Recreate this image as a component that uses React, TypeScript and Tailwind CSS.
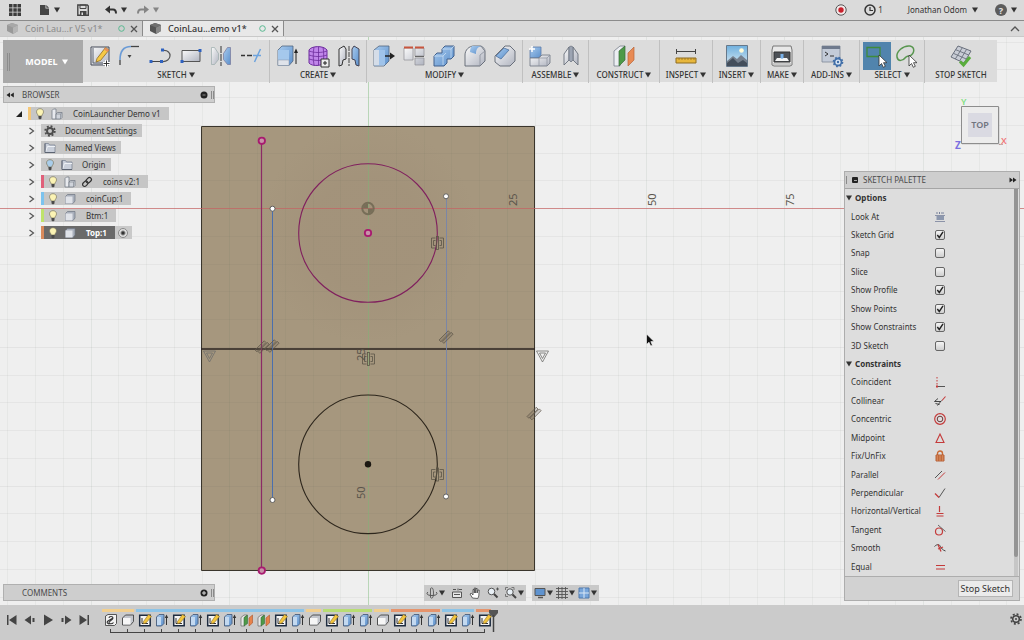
import React from "react";

type Kids = { children?: React.ReactNode };

/* ---------- shared pieces ---------- */

function Icon({ s = 24, vb = 24, children }: { s?: number; vb?: number } & Kids) {
  return (
    <svg width={s} height={s} viewBox={`0 0 ${vb} ${vb}`} fill="none" className="block shrink-0" aria-hidden="true">
      {children}
    </svg>
  );
}

function Caret({ light = false }: { light?: boolean }) {
  return (
    <svg width="6" height="6" viewBox="0 0 6 6" className="block shrink-0" aria-hidden="true">
      <path d="M0 .5h6L3 5.600z" fill={light ? "#fff" : "#333"} />
    </svg>
  );
}

function Defs() {
  return (
    <svg width="0" height="0" className="absolute" aria-hidden="true">
      <defs>
        <linearGradient id="blue" x1="0" y1="0" x2="1" y2="1">
          <stop offset="0" stopColor="#a9cbee" />
          <stop offset="1" stopColor="#5b8fcb" />
        </linearGradient>
        <linearGradient id="grey" x1="0" y1="0" x2="1" y2="1">
          <stop offset="0" stopColor="#fafafa" />
          <stop offset="1" stopColor="#b0b4c0" />
        </linearGradient>
        <linearGradient id="sky" x1="0" y1="0" x2="0" y2="1">
          <stop offset="0" stopColor="#6fb0de" />
          <stop offset="1" stopColor="#dcebf3" />
        </linearGradient>
      </defs>
    </svg>
  );
}

/* ---------- toolbar icons ---------- */

const SketchIcon = () => (
  <Icon>
    <path d="M3 3h18v18H3z" fill="url(#grey)" stroke="#444b58" />
    <path d="M5 4v15h15" stroke="#5a6270" />
    <path d="M9 14.5l8.5-11 3.5 2.5-8.500 10.500-4.500 1.500z" fill="#f6c945" stroke="#8a6a26" strokeWidth=".8" />
    <path d="M17.500 3.500l3.500 2.500-1.500 2-3.500-2.500z" fill="#e58f5c" />
    <path d="M15 19.500h7M18.500 16v7" stroke="#fff" strokeWidth="3" />
    <path d="M15.500 19.500h6M18.500 16.500v6" stroke="#333" />
  </Icon>
);
const FilletIcon = () => (
  <Icon>
    <path d="M2 21v-5" stroke="#444" strokeWidth="1.300" />
    <path d="M2 16C2 7 5 2.500 13 2.500" stroke="#6b9bd6" strokeWidth="1.600" />
    <path d="M13 2.500h8" stroke="#444" strokeWidth="1.300" />
    <path d="M9.500 11h4l-2 3z" fill="#444" />
  </Icon>
);
const PolyIcon = () => (
  <Icon>
    <path d="M2 17.500h11" stroke="#444" />
    <path d="M13 17.500c10 1 11-12 1-11" stroke="#555" strokeWidth="1.200" />
    <path d="M.500 16h3v3h-3zM11 16h3v3h-3zM12 4.500h3v3h-3z" fill="#2f62c0" />
  </Icon>
);
const RectIcon = () => (
  <Icon>
    <path d="M3 6.500h18v11H3z" fill="url(#grey)" stroke="#555" />
    <path d="M1.500 16h3v3h-3zM19.500 5h3v3h-3z" fill="#2f62c0" />
  </Icon>
);
const MirrorIcon = () => (
  <Icon>
    <path d="M2.500 3.500h3l4 6v6l-4 5h-3z" fill="url(#grey)" stroke="#9aa" strokeWidth=".7" />
    <path d="M12 2v20" stroke="#333" strokeDasharray="7 1" />
    <path d="M21.500 3.500h-3l-4 6v6l4 5h3z" fill="url(#blue)" stroke="#779" strokeWidth=".7" />
  </Icon>
);
const TrimIcon = () => (
  <Icon>
    <path d="M1 11.500h4M7 11.500h5" stroke="#333" strokeWidth="1.300" />
    <path d="M13 11.500h8M20.500 5l-6 13" stroke="#6ea4de" strokeWidth="1.500" />
  </Icon>
);
const ExtrudeIcon = () => (
  <Icon>
    <path d="M3 6l4-4h11v15l-4 4.500H3z" fill="url(#blue)" stroke="#51657f" strokeWidth=".8" />
    <path d="M3 6h11v10H3z" fill="#a5c8ec" />
    <path d="M3 16h11v5.500H3z" fill="#dfe3ea" stroke="#8592a5" strokeWidth=".5" />
    <path d="M21 20V7" stroke="#222" />
    <path d="M19 9l2-4.500L23 9z" fill="#222" />
  </Icon>
);
const FormIcon = () => (
  <Icon>
    <path d="M3 6c2-4 14-5 18 0v11c-3 5-15 6-18 2z" fill="#c086ea" stroke="#6c2c9c" />
    <path d="M3 7c6 2 12 2 18 0M3 11c6 2 12 2 18 0M3 15c6 2 12 2 18 0M8 3c-1 6-1 12 0 18M12.500 3v18M17 3c1 6 1 12 0 18" stroke="#6c2c9c" strokeWidth=".8" />
    <path d="M15 15h8v8h-8z" fill="#eee" stroke="#333" />
    <path d="M19 17v4M17 19h4" stroke="#222" />
  </Icon>
);
const MirrorSolidIcon = () => (
  <Icon>
    <path d="M2 5l5-3 2 3v10l-3 1-1 5-3 1z" fill="url(#grey)" stroke="#333" />
    <path d="M12 2v20" stroke="#444" strokeDasharray="5 1" />
    <path d="M22 5l-5-3-2 3v10l3 1 1 5 3 1z" fill="url(#blue)" stroke="#445" />
  </Icon>
);
const PressPullIcon = () => (
  <Icon>
    <path d="M2 6l5-4h10v15l-5 5H2z" fill="url(#blue)" stroke="#51657f" strokeWidth=".8" />
    <path d="M2 6h10v15.500H2z" fill="#d5dde8" />
    <path d="M7 6h6v15H7z" fill="#9fc3ea" />
    <path d="M13 12h6" stroke="#222" strokeWidth="1.500" />
    <path d="M18 8.500l5 3.500-5 3.500z" fill="#222" />
  </Icon>
);
const AlignIcon = () => (
  <Icon>
    <path d="M2 4h9v12H2zM13 4h9v8h-9zM13 14h9v7h-9z" fill="url(#grey)" stroke="#8d8d94" strokeWidth=".7" />
    <path d="M2 2.500h9v2H2zM13 2.500h9v2h-9z" fill="#c8553d" />
    <path d="M13 12.500h9" stroke="#666" />
  </Icon>
);
const CombineIcon = () => (
  <Icon>
    <path d="M2 12l3-3h5V5l3-3h9v10l-3 3h-4v4l-3 3H2z" fill="url(#blue)" stroke="#42618c" />
    <path d="M2 12h9v9M10 5h9v9M11 12l3-3M19 5l3-3" stroke="#d5e6f7" strokeWidth=".7" />
  </Icon>
);
const RoundIcon = () => (
  <Icon>
    <path d="M2 11c0-5 4-9 9-9h7l4 5v10l-5 5H2z" fill="url(#grey)" stroke="#5d6470" strokeWidth=".9" />
    <path d="M9 2h9c-3 1-5 3-5 8l-6-2c0-3 1-5 2-6z" fill="url(#blue)" />
    <path d="M18 2c3 1 4 3 4 5l-5 4v11" stroke="#8a909c" strokeWidth=".8" />
  </Icon>
);
const ChamferIcon = () => (
  <Icon>
    <path d="M2 12L12 2h5l5 5v10l-5 5H7l-5-4z" fill="url(#grey)" stroke="#5d6470" strokeWidth=".9" />
    <path d="M3 12l8-8 5 2-8 9z" fill="url(#blue)" stroke="#50729d" strokeWidth=".8" />
  </Icon>
);
const JoinIcon = () => (
  <Icon>
    <path d="M2 6l3-3h8v8l-3 3H2z" fill="url(#blue)" stroke="#5d7ca8" strokeWidth=".8" />
    <path d="M2 14h9l3-3h8v8l-3 3H2z" fill="url(#grey)" stroke="#6d7480" strokeWidth=".8" />
    <path d="M11 14v8M11 14h8l3-3M19 14v8" stroke="#8a909c" strokeWidth=".7" />
    <path d="M4 2v6M1 5h6" stroke="#fff" strokeWidth="1.500" />
  </Icon>
);
const HingeIcon = () => (
  <Icon>
    <path d="M5 10l5-7v13l-5 5zM19 10l-5-7v13l5 5z" fill="url(#grey)" stroke="#69707c" strokeWidth=".9" />
    <path d="M10 3l2-1 2 1v13l-2 2-2-2z" fill="#9ca4b2" stroke="#69707c" strokeWidth=".7" />
  </Icon>
);
const PlaneIcon = () => (
  <Icon>
    <path d="M2 7l6-5h5l-5 5v15H2z" fill="#eceef2" stroke="#777e8a" strokeWidth=".8" />
    <path d="M7 7l6-5v14l-6 6z" fill="#4d9a48" stroke="#3a6b39" strokeWidth=".7" />
    <path d="M16 9l6-6v13l-6 6z" fill="#e88a54" stroke="#b9653a" strokeWidth=".7" />
  </Icon>
);
const MeasureIcon = () => (
  <Icon>
    <path d="M2 7.500h20M2.500 5v5M21.500 5v5" stroke="#444" />
    <path d="M2 14h20v5H2z" fill="#e8b73c" stroke="#8f6d20" />
    <path d="M5 14v2M8 14v2M11 14v2M14 14v2M17 14v2M20 14v2" stroke="#8f6d20" strokeWidth=".7" />
  </Icon>
);
const PictureIcon = () => (
  <Icon>
    <path d="M1.500 1.500h21v21h-21z" fill="url(#sky)" stroke="#66788a" />
    <circle cx="16.500" cy="6.500" r="2.300" fill="#fffbd8" />
    <path d="M2 17l6-5 4 3 4-4 6 5v6H2z" fill="#76808d" />
    <path d="M2 19l6-5 5 5 5-3 4 3v3H2z" fill="#444e5b" />
  </Icon>
);
const PrinterIcon = () => (
  <Icon>
    <path d="M3 2h18l1 4v15l-2 1H4l-2-1V6z" fill="#e8e8e8" stroke="#777" />
    <path d="M4 8h16v10H4z" fill="#4d5157" stroke="#333" />
    <path d="M7 14h10l2 3H5z" fill="#f5f5f5" />
    <path d="M10.500 10h3v4l-1.500 1-1.500-1z" fill="#7ab2ea" />
    <path d="M3 20h18" stroke="#aaa" />
  </Icon>
);
const AddInsIcon = () => (
  <Icon>
    <path d="M2 2h18v16H2z" fill="#c3cbd8" stroke="#7e8897" strokeWidth=".8" />
    <path d="M2 2h18v3H2z" fill="#6f7a8d" />
    <path d="M5 8l3 2-3 2M10 12h4" stroke="#333" />
    <circle cx="18" cy="18" r="3.500" fill="#dbe7f4" stroke="#426fa8" strokeWidth="1.800" />
    <circle cx="18" cy="18" r="4.600" stroke="#426fa8" strokeWidth="1.500" strokeDasharray="1.800 1.800" />
    <circle cx="18" cy="18" r="1.200" fill="#426fa8" />
  </Icon>
);
const Pointer = () => <path d="M14 11v11l2.500-2.500 1.800 3.800 2-1-1.800-3.600H22z" fill="#fff" stroke="#333" strokeWidth=".8" />;
const SelectBoxIcon = () => (
  <Icon>
    <path d="M2 3.500h13v9H2z" stroke="#3f8b3b" strokeWidth="1.300" />
    <Pointer />
  </Icon>
);
const LassoIcon = () => (
  <Icon>
    <path d="M15 12c5-3 5-9 0-10C8 1 1 8 2 13s6 4 9 0c1-1 3-1 4-1z" stroke="#58964f" strokeWidth="1.500" />
    <Pointer />
  </Icon>
);
const StopIcon = () => (
  <Icon>
    <path d="M2 13L9 2l13 5-7 12z" fill="#c9cdd6" stroke="#6a707d" />
    <path d="M4.300 9.300l13 5.700M6.700 5.700l13 5.300M6.300 15L13.300 3.700M10.600 17l7-11.700" stroke="#6a707d" strokeWidth=".9" />
    <path d="M11 17.500l3.500 3.500 6.500-8" stroke="#59ad3c" strokeWidth="3" />
  </Icon>
);

/* ---------- toolbar ---------- */

type Group = { label: string; caret?: boolean; icons: [string, () => React.ReactNode][] };

const groups: Group[] = [
  {
    label: "SKETCH",
    icons: [
      ["Create sketch", SketchIcon],
      ["Fillet", FilletIcon],
      ["Line", PolyIcon],
      ["Rectangle", RectIcon],
      ["Mirror", MirrorIcon],
      ["Trim", TrimIcon],
    ],
  },
  { label: "CREATE", icons: [["Extrude", ExtrudeIcon], ["Create form", FormIcon], ["Mirror body", MirrorSolidIcon]] },
  {
    label: "MODIFY",
    icons: [
      ["Press pull", PressPullIcon],
      ["Align", AlignIcon],
      ["Combine", CombineIcon],
      ["Round edge", RoundIcon],
      ["Chamfer", ChamferIcon],
    ],
  },
  { label: "ASSEMBLE", icons: [["New component", JoinIcon], ["Joint", HingeIcon]] },
  { label: "CONSTRUCT", icons: [["Offset plane", PlaneIcon]] },
  { label: "INSPECT", icons: [["Measure", MeasureIcon]] },
  { label: "INSERT", icons: [["Decal", PictureIcon]] },
  { label: "MAKE", icons: [["3D print", PrinterIcon]] },
  { label: "ADD-INS", icons: [["Scripts", AddInsIcon]] },
  { label: "SELECT", icons: [["Window selection", SelectBoxIcon], ["Freeform selection", LassoIcon]] },
  { label: "STOP SKETCH", caret: false, icons: [["Finish sketch", StopIcon]] },
];

function Toolbar() {
  return (
    <div
      role="toolbar"
      className="mr-[27px] ml-[3px] grid h-[42px] grid-cols-[80fr_186fr_97fr_156fr_66fr_71fr_53fr_48fr_43fr_56fr_65fr_73fr] bg-[#dcdcdc]"
    >
      <button className="flex items-center bg-[#a9a9a9] text-[9px] font-bold text-white">
        <span className="ml-1 h-[18px] w-[3px] border-x border-[#8c8c8c]" />
        <span className="flex flex-1 items-center justify-center gap-[4px]">
          MODEL <Caret light />
        </span>
      </button>
      {groups.map((g, gi) => (
        <div key={g.label} className={`flex flex-col justify-between py-[2px] ${gi > 0 ? "border-l border-[#c0c0c0]" : ""}`}>
          <div className="flex justify-around px-[2px]">
            {g.icons.map(([name, Glyph]) => (
              <button
                key={name}
                aria-label={name}
                className={`flex h-[28px] w-[28px] items-center justify-center ${name === "Window selection" ? "bg-[#5184ad]" : ""}`}
              >
                <Glyph />
              </button>
            ))}
          </div>
          <button className="flex items-center justify-center gap-[2px] pb-px text-[8px] leading-[10px] font-medium whitespace-nowrap text-[#333]">
            {g.label}
            {g.caret !== false && <Caret />}
          </button>
        </div>
      ))}
    </div>
  );
}

/* ---------- top bars ---------- */

function AppBar() {
  return (
    <header className="flex h-[21px] items-center justify-between border-b border-[#8b8b8b] bg-[#dadada] pr-[7px] pl-[9px] text-[8px] text-[#333]">
      <div className="flex items-center">
        <button aria-label="Data panel" className="mr-[19px]">
          <Icon s={12} vb={12}>
            <path d="M0 0h3.500v3.500H0zM4.300 0h3.500v3.500H4.300zM8.500 0H12v3.500H8.500zM0 4.300h3.500v3.500H0zM4.300 4.300h3.500v3.500H4.300zM8.500 4.300H12v3.500H8.500zM0 8.500h3.500V12H0zM4.300 8.500h3.500V12H4.300zM8.500 8.500H12V12H8.500z" fill="#3c3c3c" />
          </Icon>
        </button>
        <button aria-label="File" className="mr-[17px] flex items-center gap-1">
          <Icon s={10} vb={10}>
            <path d="M0 0h5.500v3.500H9V10H0z" fill="#444" />
            <path d="M6.300 0L9 2.800H6.300z" fill="#444" />
          </Icon>
          <Caret />
        </button>
        <button aria-label="Save" className="mr-[16px]">
          <Icon s={12} vb={12}>
            <path d="M.800 1h9.500l1 1v9.200H.800z" stroke="#444" strokeWidth="1.400" />
            <path d="M3 1h6v3.500H3z" stroke="#444" />
            <path d="M3 7h6.500v4H3z" fill="#444" />
            <path d="M4.500 8.500H6V11H4.500z" fill="#ddd" />
          </Icon>
        </button>
        <button aria-label="Undo" className="mr-[10px] flex items-center gap-1">
          <Icon s={12} vb={12}>
            <path d="M0 5.500L5 1.500v8z" fill="#333" />
            <path d="M4 5.500h4c2.500 0 3 1.500 3 4" stroke="#333" strokeWidth="2" />
          </Icon>
          <Caret />
        </button>
        <button aria-label="Redo" className="flex items-center gap-1 opacity-50">
          <Icon s={12} vb={12}>
            <path d="M12 5.500L7 1.500v8z" fill="#333" />
            <path d="M8 5.500H4c-2.500 0-3 1.500-3 4" stroke="#333" strokeWidth="2" />
          </Icon>
          <Caret />
        </button>
      </div>
      <div className="flex items-center">
        <button aria-label="Record" className="mr-[17px]">
          <Icon s={12} vb={12}>
            <circle cx="6" cy="6" r="5.200" fill="#f3e9e9" stroke="#555" />
            <circle cx="6" cy="6" r="2.700" fill="#c8202c" />
          </Icon>
        </button>
        <button aria-label="Job status" className="mr-[25px] flex items-center gap-[2px]">
          <Icon s={12} vb={12}>
            <circle cx="6" cy="6" r="5" stroke="#333" strokeWidth="1.500" />
            <path d="M6 3v3.500h3" stroke="#333" strokeWidth="1.200" />
          </Icon>
          1
        </button>
        <button className="mr-[17px] flex items-center gap-[5px]">
          Jonathan Odom <Caret />
        </button>
        <button aria-label="Help" className="flex items-center gap-1">
          <span className="flex h-[12px] w-[12px] items-center justify-center rounded-full bg-[#5c5c5c] text-[9px] leading-none font-bold text-[#e5e5e5]">?</span>
          <Caret />
        </button>
      </div>
    </header>
  );
}

function Tab({ name, active = false }: { name: string; active?: boolean }) {
  return (
    <div
      className={`flex h-full items-center border-r border-[#8a8a8a] pr-[4px] pl-[6px] text-[9px] ${
        active ? "w-[141px] bg-[#e8e8e8] font-medium text-[#333]" : "w-[143px] bg-[#cfcfcf] text-[#8a8a8a]"
      }`}
    >
      <Icon s={13} vb={13}>
        <path d="M1 3l5-2 6 2v6l-5 3-6-3z" fill={active ? "#555" : "#999"} />
        <path d="M7 5.500l5-2.500v6l-5 3z" fill={active ? "#888" : "#b5b5b5"} />
        <path d="M1 3l5-2 6 2-5 2.500z" fill={active ? "#707070" : "#a8a8a8"} />
      </Icon>
      <button className="ml-[6px] flex-1 text-left whitespace-nowrap">{name}</button>
      <Icon s={7} vb={7}>
        <circle cx="3.500" cy="3.500" r="2.800" stroke="#58b890" />
      </Icon>
      <button aria-label={`Close ${name}`} className="ml-[5px]">
        <Icon s={8} vb={8}>
          <path d="M1 1l6 6M7 1L1 7" stroke="#555" strokeWidth="1.300" />
        </Icon>
      </button>
    </div>
  );
}

function TabBar() {
  return (
    <nav className="flex h-[16px] items-center border-b border-[#c9c9c9] bg-[#d9d9d9]">
      <Tab name="Coin Lau...r V5 v1*" />
      <Tab name="CoinLau...emo v1*" active />
      <button aria-label="Collapse" className="mr-[4px] ml-auto">
        <Icon s={10} vb={10}>
          <path d="M1 7l4-4 4 4" stroke="#555" strokeWidth="1.300" />
        </Icon>
      </button>
    </nav>
  );
}

/* ---------- browser tree ---------- */

const Bulb = ({ off = false }: { off?: boolean }) => (
  <Icon s={12} vb={12}>
    <path d="M6 .700c2 0 3.500 1.300 3.500 3.200C9.500 5.700 8 6.200 7.800 8H4.200C4 6.200 2.500 5.700 2.500 3.900 2.500 2 4 .700 6 .700z" fill={off ? "#a9cdea" : "#fbf3b4"} stroke="#7d7860" strokeWidth=".7" />
    <path d="M4.500 8h3v2.500L6 11.600 4.500 10.500z" fill="#4a4a4a" />
  </Icon>
);
const Assembly = () => (
  <Icon s={12} vb={12}>
    <path d="M1 2.500L2.500 1H5v10H1z" fill="#e8eaee" stroke="#777d88" strokeWidth=".8" />
    <path d="M5 6l1.500-1.500H11v5L9.500 11H5z" fill="#d0d4db" stroke="#777d88" strokeWidth=".8" />
    <path d="M5 6h4.500v5M9.500 6L11 4.500" stroke="#777d88" strokeWidth=".6" />
  </Icon>
);
const Folder = () => (
  <Icon s={12} vb={12}>
    <path d="M1 1.500h3.500l1 1.500h5.500v7.500H1z" fill="#c9cfda" stroke="#7d8695" strokeWidth=".8" />
    <path d="M1.500 10l2-5.500h7.500" stroke="#eef1f5" />
    <path d="M1 1.500v9h10" stroke="#5c6472" />
  </Icon>
);
const Gear = () => (
  <Icon s={12} vb={12}>
    <circle cx="6" cy="6" r="4.800" stroke="#4c4c4c" strokeWidth="1.800" strokeDasharray="1.900 1.870" />
    <circle cx="6" cy="6" r="3" stroke="#4c4c4c" strokeWidth="2" />
  </Icon>
);
const Link = () => (
  <Icon s={12} vb={12}>
    <g transform="rotate(-45 6 6)" stroke="#333" strokeWidth="1.200">
      <rect x=".6" y="4" width="6" height="4" rx="2" />
      <rect x="5.400" y="4" width="6" height="4" rx="2" />
    </g>
  </Icon>
);
const Body = () => (
  <Icon s={12} vb={12}>
    <path d="M1.500 3.500L3.500 1.500h7.500v6.500L9 10.500H1.500z" fill="#a9b0bc" stroke="#6d7582" strokeWidth=".7" />
    <path d="M1.500 3.500h7v7h-7z" fill="#e0e3e9" />
  </Icon>
);

type Node = { label: string; icons: (() => React.ReactNode)[]; strip?: string; root?: boolean; selected?: boolean };

const OffBulb = () => <Bulb off />;

const nodes: Node[] = [
  { label: "CoinLauncher Demo v1", icons: [Bulb, Assembly], strip: "bg-[#f5c878]", root: true },
  { label: "Document Settings", icons: [Gear] },
  { label: "Named Views", icons: [Folder] },
  { label: "Origin", icons: [OffBulb, Folder] },
  { label: "coins v2:1", icons: [Bulb, Assembly, Link], strip: "bg-[#e0607a]" },
  { label: "coinCup:1", icons: [Bulb, Body], strip: "bg-[#7cc3ee]" },
  { label: "Btm:1", icons: [Bulb, Body], strip: "bg-[#bfe36c]" },
  { label: "Top:1", icons: [Bulb, Body], strip: "bg-[#d98a5c]", selected: true },
];

function PanelHeader({ title, minus = false }: { title: string; minus?: boolean }) {
  return (
    <div className="flex h-[17px] items-center border border-[#b0b0b0] bg-[#cecece] text-[8px] text-[#4a4a4a]">
      <span className="w-[18px] pl-[2px]">
        {minus && (
          <Icon s={8} vb={8}>
            <path d="M4 1.500v5L.500 4zM7.800 1.500v5L4.300 4z" fill="#222" />
          </Icon>
        )}
      </span>
      <h2 className="flex-1">{title}</h2>
      <button aria-label={minus ? "Hide browser" : "Add comment"} className="mr-[3px]">
        <Icon s={8} vb={8}>
          <circle cx="4" cy="4" r="3.500" fill="#222" />
          {!minus && <path d="M4 2v4M2 4h4" stroke="#ddd" />}
          {minus && <path d="M2.500 4h3" stroke="#888" />}
        </Icon>
      </button>
      <span className="h-[8px] w-[3px] border-x border-[#8a8a8a]" />
    </div>
  );
}

function Browser() {
  return (
    <section aria-label="Browser">
      <PanelHeader title="BROWSER" minus />
      <ul className="pt-[2px] text-[8px] text-[#333]">
        {nodes.map((n) => (
          <li key={n.label} className={`flex h-[17px] items-center ${n.root ? "pl-[12px]" : "pl-[24px]"}`}>
            <button aria-label={`Toggle ${n.label}`} className={n.root ? "w-[13px]" : "w-[14px]"}>
              <Icon s={8} vb={8}>
                {n.root ? <path d="M7 1v6H1z" fill="#222" /> : <path d="M2.500 1l4 3-4 3" stroke="#555" strokeWidth="1.200" />}
              </Icon>
            </button>
            <div className={`flex h-[13px] items-center ${n.selected ? "bg-[#6a6a6a] font-bold text-white" : "bg-[#c6c6c6]"}`}>
              {n.strip && <span className={`h-full w-[3px] ${n.strip}`} />}
              {n.icons.map((G, i) => (
                <span key={i} className="flex w-[17px] justify-center">
                  <G />
                </span>
              ))}
              <span className={n.strip ? "pr-2 pl-2" : "pr-[5px] pl-[7px]"}>{n.label}</span>
            </div>
            {n.selected && (
              <label className="flex h-[13px] w-[17px] items-center justify-center bg-[#c9c9c9]">
                <input
                  type="radio"
                  defaultChecked
                  aria-label="Activate Top:1"
                  className="m-0 h-[10px] w-[10px] appearance-none rounded-full border border-[#888] bg-[#e8e8e8] checked:bg-[radial-gradient(circle,#333_1px,#e0e0e0_3px)]"
                />
              </label>
            )}
          </li>
        ))}
      </ul>
    </section>
  );
}

/* ---------- sketch palette ---------- */

const options: [string, boolean][] = [
  ["Sketch Grid", true],
  ["Snap", false],
  ["Slice", false],
  ["Show Profile", true],
  ["Show Points", true],
  ["Show Constraints", true],
  ["3D Sketch", false],
];

const R = "#c43a3a";
const constraints: [string, React.ReactNode][] = [
  ["Coincident", <><path d="M3 1v8" stroke={R} strokeDasharray="1.500 1.500" /><path d="M3 10.500h8" stroke="#555" /><path d="M2 9.500h2v2H2z" fill={R} /></>],
  ["Collinear", <><path d="M8 5.500l3.500-4" stroke={R} strokeWidth="1.100" /><path d="M.500 6.500l3.500-3M.500 6.500h6.500M3.500 10.500l4-5M1.500 8.500l4 1" stroke="#333" strokeWidth=".9" /></>],
  ["Concentric", <><circle cx="6" cy="6" r="5.300" stroke={R} strokeWidth="1.200" /><circle cx="6" cy="6" r="2.800" stroke="#6a3a3a" /></>],
  ["Midpoint", <path d="M6 2l4 8.500H2z" stroke={R} strokeWidth="1.100" />],
  ["Fix/UnFix", <><path d="M3.500 5V3.500a2.500 2.500 0 015 0V5" stroke="#c96a35" strokeWidth="1.400" /><path d="M2 5h8v6H2z" fill="#e8a070" stroke="#b0552a" strokeWidth=".9" /><path d="M2 7h8M2 9h8M4.700 5v6M7.300 5v6" stroke="#b0552a" strokeWidth=".7" /></>],
  ["Parallel", <><path d="M1 9l7-7" stroke="#555" /><path d="M4 10.500l7-7" stroke={R} /></>],
  ["Perpendicular", <><path d="M5 10.500l6-9" stroke="#555" /><path d="M1 6.500l4 4" stroke={R} strokeWidth="1.200" /></>],
  ["Horizontal/Vertical", <><path d="M5.500 1v6" stroke={R} strokeWidth="1.200" /><path d="M2.500 8.500h7M2.500 11h7" stroke={R} /></>],
  ["Tangent", <><circle cx="5" cy="7.500" r="3.500" stroke={R} strokeWidth="1.200" /><path d="M4 1l7.500 6.500" stroke="#666" /></>],
  ["Smooth", <><path d="M.500 4.500c3-3 5-2 6 0s2 3.500 5 4.500" stroke="#444" /><path d="M4 2.500l3 7M4 7l5-2" stroke={R} strokeWidth="1.300" /></>],
  ["Equal", <path d="M2 4.500h9M2 8h9" stroke={R} strokeWidth="1.200" />],
];

function PaletteHeading({ children }: Kids) {
  return (
    <button className="flex items-center gap-[3px] pl-px text-left font-bold">
      <Caret />
      {children}
    </button>
  );
}

function Palette() {
  return (
    <section aria-label="Sketch palette" className="flex min-h-0 flex-1 flex-col border border-[#adadad] bg-[#dddddd] text-[8px] text-[#333]">
      <div className="flex h-[17px] shrink-0 items-center border-b border-[#a5a5a5] bg-[#cecece] pr-[2px] text-[#4a4a4a]">
        <span className="h-[8px] w-[2px] border-r border-[#8a8a8a]" />
        <span className="ml-[5px] flex h-[6px] w-[6px] items-center justify-center rounded-[1px] bg-[#222]">
          <span className="h-px w-[3px] bg-[#aaa]" />
        </span>
        <h2 className="ml-[5px] flex-1">SKETCH PALETTE</h2>
        <button aria-label="Collapse palette">
          <Icon s={8} vb={8}>
            <path d="M.500 1.500v5L4 4zM4 1.500v5L7.500 4z" fill="#222" />
          </Icon>
        </button>
      </div>
      <div className="flex min-h-0 flex-1">
        <div className="grid flex-1 auto-rows-fr items-stretch">
          <PaletteHeading>Options</PaletteHeading>
          <button className="flex items-center pl-[6px] text-left">
            <span className="w-[83px]">Look At</span>
            <Icon s={12} vb={12}>
              <path d="M2 2h2M5.500 1v2M7 2h3" stroke="#77809a" />
              <path d="M2.500 5h7.500v4H2.500z" fill="#8c97ad" />
              <path d="M1 4.500h10M1 10.500h10" stroke="#77809a" strokeWidth=".8" />
            </Icon>
          </button>
          {options.map(([label, on]) => (
            <label key={label} className="flex items-center pl-[6px]">
              <span className="w-[84px]">{label}</span>
              <span className="relative block h-[10px] w-[10px]">
                <input
                  type="checkbox"
                  defaultChecked={on}
                  className="peer m-0 block h-[10px] w-[10px] appearance-none rounded-[2px] border border-[#666] bg-linear-to-b from-[#f4f4f4] to-[#cfcfcf]"
                />
                <svg viewBox="0 0 10 10" className="pointer-events-none absolute inset-0 hidden h-[10px] w-[10px] peer-checked:block" aria-hidden="true">
                  <path d="M2.300 5l2 2.500L8 1.800" stroke="#222" strokeWidth="1.400" fill="none" />
                </svg>
              </span>
            </label>
          ))}
          <PaletteHeading>Constraints</PaletteHeading>
          {constraints.map(([label, art]) => (
            <button key={label} className="flex items-center pl-[6px] text-left">
              <span className="w-[83px]">{label}</span>
              <Icon s={12} vb={12}>{art}</Icon>
            </button>
          ))}
        </div>
        <div className="mr-px w-[4px] bg-[#c6c6c6]">
          <div className="h-[95%] rounded-b-[2px] bg-[#949494]" />
        </div>
      </div>
      <div className="flex h-[24px] shrink-0 items-center justify-end border-t border-[#adadad] bg-[#d2d2d2] pr-[6px]">
        <button className="h-[17px] border border-[#b5b5b5] bg-[#ebebeb] px-[2px] text-[9px] leading-[15px]">Stop Sketch</button>
      </div>
    </section>
  );
}

/* ---------- drawing canvas ---------- */

const STEP = 27.75;
const gx = Array.from({ length: 37 }, (_, i) => i - 13);
const gy = Array.from({ length: 21 }, (_, i) => i - 6);

function Hatch({ x, y }: { x: number; y: number }) {
  return (
    <g transform={`translate(${x} ${y}) rotate(-45)`} stroke="#5e574a" strokeWidth=".7" fill="#5e574a" fillOpacity=".2">
      <rect x="-7" y="-2.800" width="13" height="2.500" />
      <rect x="-6" y=".5" width="13" height="2.500" />
    </g>
  );
}
function Symmetry({ x, y }: { x: number; y: number }) {
  return (
    <g transform={`translate(${x} ${y})`} stroke="#5a5446" strokeWidth=".8" fill="none">
      <path d="M-2-5h-4V5h4M2-5h4V5H2M-2-2.500h-2v5h2M2-2.500h2v5H2" />
      <rect x="-1" y="-6.500" width="2" height="13" />
    </g>
  );
}
function Tri({ x, y }: { x: number; y: number }) {
  return (
    <g transform={`translate(${x} ${y})`} stroke="#6f6f6c" strokeWidth=".8" fill="none">
      <path d="M-6-5H6L0 6zM-3-3H3L0 2.500z" />
    </g>
  );
}

function Canvas() {
  const cls = "font-['Noto_Sans',sans-serif] text-[11px]";
  return (
    <svg className="absolute inset-0 h-full w-full" viewBox="0 37 1024 568" preserveAspectRatio="xMidYMid slice" fill="none" aria-label="Sketch canvas">
      <defs>
        <radialGradient id="shade">
          <stop offset=".5" stopColor="#94806c" stopOpacity=".18" />
          <stop offset="1" stopColor="#94806c" stopOpacity="0" />
        </radialGradient>
      </defs>
      <path d="M0 0h1024v640H0z" fill="#efefef" />
      <path d="M201.500 126.500h333v444h-333z" fill="#a6977e" />
      <circle cx="368" cy="233" r="110" fill="url(#shade)" />
      <g shapeRendering="crispEdges">
        {gx.map((i) => (
          <path key={i} d={`M${368.5 + i * STEP} 0V640`} stroke="#4a6a55" strokeOpacity={i % 5 === 0 ? 0.09 : 0.05} />
        ))}
        {gy.map((i) => (
          <path key={i} d={`M0 ${208.5 + i * STEP}H1024`} stroke="#555" strokeOpacity={i % 5 === 0 ? 0.08 : 0.06} />
        ))}
      </g>
      <path d="M368.500 37V605" stroke="#7fc47a" strokeOpacity=".4" />
      <path d="M201.500 126.500h333v444h-333z" stroke="#3a352c" />
      <path d="M0 208.500h1024" stroke="#c86464" strokeOpacity=".7" />
      <path d="M201 349h334" stroke="#2b2320" strokeWidth="1.500" />
      <g opacity=".8">
        <circle cx="368" cy="208.500" r="5.700" stroke="#6d6550" strokeWidth="2" />
        <path d="M368 208.500v-5a5 5 0 00-5 5zM368 208.500v5a5 5 0 005-5z" fill="#6d6550" />
      </g>
      <path d="M261.500 141v430" stroke="#8c2a66" strokeWidth="1.200" />
      <path d="M272.500 209v291" stroke="#4a6fae" />
      <path d="M446.500 197v299" stroke="#7784ab" strokeOpacity=".9" />
      <circle cx="368" cy="233" r="69.300" stroke="#80205e" strokeWidth="1.100" />
      <circle cx="368" cy="464.300" r="69.300" stroke="#2d261c" strokeWidth="1.100" />
      <g stroke="#a81a70" strokeWidth="1.800" fill="#c793a8">
        <circle cx="261.800" cy="140.800" r="3.200" />
        <circle cx="368" cy="233" r="3.200" />
        <circle cx="261.800" cy="570.600" r="3.200" />
      </g>
      <circle cx="368" cy="464.300" r="3.200" fill="#1c1812" />
      <g fill="#fff" stroke="#555" strokeWidth=".9">
        <circle cx="272.500" cy="208.700" r="2.500" />
        <circle cx="446" cy="196.300" r="2.500" />
        <circle cx="272.500" cy="500" r="2.500" />
        <circle cx="446" cy="496.500" r="2.500" />
      </g>
      <Hatch x={262} y={347} />
      <Hatch x={272} y={346} />
      <Hatch x={446} y={337} />
      <Hatch x={534} y={413.500} />
      <Symmetry x={437.500} y={243} />
      <Symmetry x={368.500} y={359} />
      <Symmetry x={437.500} y={474.500} />
      <Tri x={209.500} y={356} />
      <Tri x={542.500} y={356} />
      <g fill="#5a554b">
        <text className={cls} transform="translate(517 206) rotate(-90)">25</text>
        <text className={cls} transform="translate(656 206) rotate(-90)">50</text>
        <text className={cls} transform="translate(794 206) rotate(-90)">75</text>
        <text className={cls} transform="translate(365 361) rotate(-90)">25</text>
        <text className={cls} transform="translate(365 499) rotate(-90)">50</text>
      </g>
      <path d="M646.500 334v10.500l2.500-2.300 1.700 3.800 1.700-.8-1.600-3.600h3.300z" fill="#111" stroke="#fff" strokeWidth=".6" />
    </svg>
  );
}

function ViewCube() {
  return (
    <div className="flex h-[85px] justify-end pt-[8px] pr-[10px]">
      <svg width="56" height="60" viewBox="0 0 56 60" fill="none" className="font-['Noto_Sans',sans-serif]" aria-label="View cube">
        <path d="M45 50.500h4" stroke="#c9a7a7" />
        <path d="M8 13h38v38H8z" fill="#000" opacity=".08" />
        <path d="M7.500 12.500h37v37h-37z" fill="#ececec" stroke="#8d8d8d" />
        <path d="M14 19h24v24H14z" fill="#dadae2" />
        <text x="26" y="34" textAnchor="middle" fill="#70747e" className="text-[9px] font-semibold">TOP</text>
        <text x="7" y="11" fill="#7fe07f" className="text-[9px] font-semibold">Y</text>
        <text x="47" y="50" fill="#f07a7a" className="text-[9px] font-semibold">X</text>
        <text x="1" y="55" fill="#7b6fe0" className="text-[10px] font-bold">Z</text>
      </svg>
    </div>
  );
}

/* ---------- navigation bar ---------- */

const navA: [string, boolean, React.ReactNode][] = [
  ["Orbit", true, <><path d="M4.500 1.500C6 0 7.500 1 7.500 6s-1.500 6-3 4.500V1.500z" stroke="#555" strokeWidth=".9" /><path d="M2 5C-.5 7 2 8.500 6 8.500S12.500 7 10 5" stroke="#555" /></>],
  ["Look at", false, <><path d="M1.500 5h9v5.500h-9z" fill="#e8e8e8" stroke="#555" /><path d="M2 2.500h3M7 1.500v2M8 2.500h3M3 7.500h6" stroke="#555" /></>],
  ["Pan", false, <path d="M3.500 11L1 7l1.200-.8L4 8V2.500h1.300V6V1h1.400v5l.3-4.500h1.200V6l.8-3h1.200L9.800 9l-1 2.500z" fill="#fff" stroke="#444" strokeWidth=".8" />],
  ["Zoom", false, <><circle cx="4.500" cy="4.500" r="3.300" fill="#e9f0f6" stroke="#555" /><path d="M7 7l3.500 3.500" stroke="#444" strokeWidth="2" /><path d="M9 2h3M10.500.500v3" stroke="#444" strokeWidth=".8" /></>],
  ["Fit", true, <><path d="M.500 3V.500H3M6.500.500H9V3M.500 7v2.500H3" stroke="#777" /><circle cx="5" cy="5" r="3.200" fill="#e9f0f6" stroke="#555" /><path d="M7.500 7.500L11 11" stroke="#444" strokeWidth="2" /></>],
];
const navB: [string, boolean, React.ReactNode][] = [
  ["Display settings", true, <><path d="M1 1.500h10v7H1z" fill="#5f93cf" stroke="#555" /><path d="M4 10.500h5" stroke="#555" strokeWidth="1.500" /></>],
  ["Grid settings", true, <path d="M0 1.500h12M0 4.500h12M0 7.500h12M0 10.500h12M2.500 0v12M6 0v12M9.500 0v12" stroke="#555" strokeWidth=".9" />],
  ["Viewports", true, <><path d="M1 1h10v10H1z" fill="#77a5da" stroke="#4f78ac" /><path d="M6 1v10M1 6h10" stroke="#dbe8f6" /></>],
];

function NavBar() {
  const bar = "flex h-[16px] items-center bg-[#c9c9c9] px-[2px]";
  return (
    <div className="flex gap-[6px]">
      {[navA, navB].map((items, i) => (
        <div key={i} className={`${bar} ${i === 0 ? "gap-[6px]" : "gap-[3px]"}`}>
          {items.map(([name, menu, art]) => (
            <button key={name} aria-label={name} className="flex items-center gap-px">
              <Icon s={12} vb={12}>{art}</Icon>
              {menu && <Caret />}
            </button>
          ))}
        </div>
      ))}
    </div>
  );
}

/* ---------- timeline ---------- */

const TLink = () => (
  <Icon s={14} vb={14}>
    <path d="M1.500 3L4 1.500h8.500v9l-2 2h-9z" fill="#f1f1f1" stroke="#555" />
    <path d="M5 5c0-2 4-2 4 0S5 8 5 9.500s3 2 4.500 0M9 5L4 8c-2 1.500 0 3.500 2 2.500" stroke="#333" strokeWidth="1.100" />
  </Icon>
);
const TBox = () => (
  <Icon s={14} vb={14}>
    <path d="M1.500 5l3-3h8v6.500l-3 3.500h-8z" fill="#c2c5cc" stroke="#444" strokeWidth=".9" strokeLinejoin="round" />
    <path d="M2 5h7.500v6.500H2z" fill="#f6f6f6" />
  </Icon>
);
const TSketch = () => (
  <Icon s={14} vb={14}>
    <path d="M1.700 2.200h10.500v10.500H1.700z" fill="#f4f4f4" stroke="#1e2c40" strokeWidth="1.500" />
    <path d="M4 5v5.500h6" stroke="#333" />
    <path d="M5.500 8.500l5-7 3 2-5.500 6.500-2.500.7z" fill="#f3c53e" stroke="#8a6d2a" strokeWidth=".6" />
  </Icon>
);
const TExtrude = () => (
  <Icon s={14} vb={14}>
    <path d="M1.500 4L4 1.500h5v9L6.500 13h-5z" fill="url(#blue)" stroke="#4b5f7c" strokeWidth=".9" />
    <path d="M2 4h4v8H2z" fill="#c3d9f0" />
    <path d="M11.500 12V4" stroke="#333" />
    <path d="M9.800 5l1.700-3.500L13.200 5z" fill="#333" />
  </Icon>
);
const TPlane = () => (
  <Icon s={14} vb={14}>
    <path d="M1 4.500L4 2h3L4.500 4.500V13H1z" fill="#e8e8e8" stroke="#666" strokeWidth=".7" />
    <path d="M4 4.500L7.500 2v8.500L4 13z" fill="#4d9a48" stroke="#3a6b39" strokeWidth=".6" />
    <path d="M9 5l3.500-3v8L9 13z" fill="#e8824a" stroke="#a9562c" strokeWidth=".6" />
  </Icon>
);

const glyphs: Record<string, () => React.ReactNode> = { L: TLink, B: TBox, S: TSketch, E: TExtrude, P: TPlane };
const segments: [string, string][] = [
  ["bg-[#f2cf8e]", "LB"],
  ["bg-[#8cc4e8]", "SESESEPPSE"],
  ["bg-[#f2cf8e]", "B"],
  ["bg-[#b8dd74]", "SEE"],
  ["bg-[#f2cf8e]", "B"],
  ["bg-[#e6946c]", "SEE"],
  ["bg-[#8cc4e8]", "SE"],
  ["bg-[#e6946c]", "S"],
];

const playback: [string, string][] = [
  ["First step", "M1 1h1.500v10H1zM10.500 1v10L3 6z"],
  ["Previous step", "M7 1.500v9L.500 6zM8.500 4h2v4h-2z"],
  ["Play", "M2 .500L11 6l-9 5.500z"],
  ["Next step", "M5 1.500v9L11.500 6zM1.500 4h2v4h-2z"],
  ["Last step", "M9.500 1H11v10H9.500zM1.500 1v10L9 6z"],
];

function Timeline() {
  return (
    <footer className="flex h-[35px] items-start bg-[#cbcbcb] pr-[2px] pl-[6px]">
      <div className="flex gap-[6px] pt-[9px]">
        {playback.map(([name, d]) => (
          <button key={name} aria-label={name}>
            <Icon s={12} vb={12}>
              <path d={d} fill="#444" />
            </Icon>
          </button>
        ))}
      </div>
      <div className="ml-[12px] flex pt-[4px]">
        {segments.map(([color, steps], i) => (
          <div key={i}>
            <div className={`mr-[2px] h-[3px] ${color}`} />
            <div className="flex">
              {steps.split("").map((k, j) => {
                const G = glyphs[k];
                const first = i === 0 && j === 0;
                const last = i === segments.length - 1;
                return (
                  <div key={j} className="flex w-[17px] flex-col items-center pt-[1px]">
                    <G />
                    <span className="mt-[2px] h-[3px] w-px bg-[#444]" />
                    <span className={`h-px bg-[#444] ${first ? "w-[9px] self-end" : last ? "w-[9px] self-start" : "w-full"}`} />
                  </div>
                );
              })}
            </div>
          </div>
        ))}
      </div>
      <svg width="10" height="24" viewBox="0 0 10 24" className="mt-[4px] -ml-[4px]" aria-hidden="true">
        <path d="M0 1h9v3L5.500 8h-2L0 4z" fill="#555" />
        <path d="M4.500 6v17" stroke="#444" strokeWidth="1.500" />
      </svg>
      <button aria-label="Timeline settings" className="mt-[8px] ml-auto">
        <Icon s={12} vb={12}>
          <circle cx="6" cy="6" r="5" stroke="#444" strokeWidth="1.600" strokeDasharray="2 1.920" />
          <circle cx="6" cy="6" r="3.300" stroke="#444" strokeWidth="1.600" />
          <circle cx="6" cy="6" r="1" fill="#444" />
        </Icon>
      </button>
    </footer>
  );
}

/* ---------- page ---------- */

export default function App() {
  return (
    <div className="flex h-screen min-h-[560px] flex-col overflow-hidden bg-[#efefef] font-['Noto_Sans',sans-serif]">
      <Defs />
      <AppBar />
      <TabBar />
      <main className="relative flex min-h-0 flex-1 flex-col">
        <Canvas />
        <div className="relative flex min-h-0 flex-1 flex-col pt-[3px] pb-[4px]">
          <Toolbar />
          <div className="flex min-h-0 flex-1 pt-[4px] pr-[4px] pl-[3px]">
            <div className="flex w-[212px] flex-col justify-between">
              <Browser />
              <PanelHeader title="COMMENTS" />
            </div>
            <div className="flex flex-1 items-end justify-center pr-[36px]">
              <NavBar />
            </div>
            <div className="flex w-[176px] flex-col">
              <ViewCube />
              <Palette />
            </div>
          </div>
        </div>
      </main>
      <Timeline />
    </div>
  );
}
